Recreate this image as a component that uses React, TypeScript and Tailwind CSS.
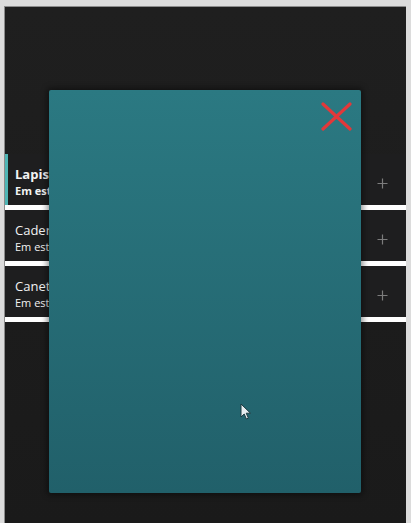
import React from 'react';

type Item = { name: string; status: string; active?: boolean };

const ITEMS: Item[] = [
  { name: 'Lapis Azul', status: 'Em estoque', active: true },
  { name: 'Caderno', status: 'Em estoque' },
  { name: 'Caneta', status: 'Em estoque' },
];

const PlusIcon = () => (
  <svg width="11" height="11" viewBox="0 0 11 11" className="text-[#7c7c7c]">
    <path d="M5.5 0.5v10M0.5 5.5h10" stroke="currentColor" strokeWidth="1.2" />
  </svg>
);

const CloseIcon = () => (
  <svg width="31" height="29" viewBox="0 0 31 29">
    <path d="M2 2l27 25M29 2L2 27" stroke="#e2383a" strokeWidth="3.2" strokeLinecap="round" />
  </svg>
);

const Cursor = () => (
  <svg width="12" height="17" viewBox="0 0 12 17">
    <path
      d="M1 1v13l3.2-3 2.2 5 2-0.9-2.2-4.9h4.3z"
      fill="#e8eef0"
      stroke="#1d3a40"
      strokeWidth="1"
      strokeLinejoin="round"
    />
  </svg>
);

const Row = ({ item }: { item: Item }) => (
  <div
    className={`flex items-start h-[51px] bg-[#1e1e1f] pr-[18px] ${
      item.active ? 'border-l-[3px] border-[#4fb5b5] pl-[7px]' : 'pl-[10px]'
    }`}
  >
    <div className="flex-1 flex flex-col pt-[11px]">
      <span className={`text-[13px] leading-[18px] text-[#f2f2f2] ${item.active ? 'font-bold' : ''}`}>
        {item.name}
      </span>
      <span className={`text-[11px] leading-[15px] text-[#f2f2f2] ${item.active ? 'font-bold' : ''}`}>
        {item.status}
      </span>
    </div>
    <div className="mt-[24px]">
      <PlusIcon />
    </div>
  </div>
);

export default function App() {
  return (
    <div
      className="relative w-[411px] h-[523px] overflow-hidden bg-[#dcdcdc] pt-[6px] pl-[4px] pr-[5px]"
      style={{ fontFamily: '"Open Sans", "Noto Sans", sans-serif' }}
    >
      <div className="h-full border-t border-l border-[#8c8c8c] bg-gradient-to-b from-[#1f1f1f] to-[#1a1a1a]">
        <div className="pt-[147px] flex flex-col">
          {ITEMS.map((item) => (
            <div key={item.name} className="flex flex-col">
              <Row item={item} />
              <div className="h-[5px] bg-white" />
            </div>
          ))}
        </div>
      </div>

      {/* detail modal */}
      <div className="absolute left-[49px] top-[90px] w-[312px] h-[403px] rounded-[2px] bg-gradient-to-b from-[#2b7982] to-[#21606a] shadow-[0_0_6px_2px_rgba(0,0,0,0.45)]">
        <button className="absolute right-[9px] top-[12px]">
          <CloseIcon />
        </button>
      </div>

      <div className="absolute left-[240px] top-[403px]">
        <Cursor />
      </div>
    </div>
  );
}
